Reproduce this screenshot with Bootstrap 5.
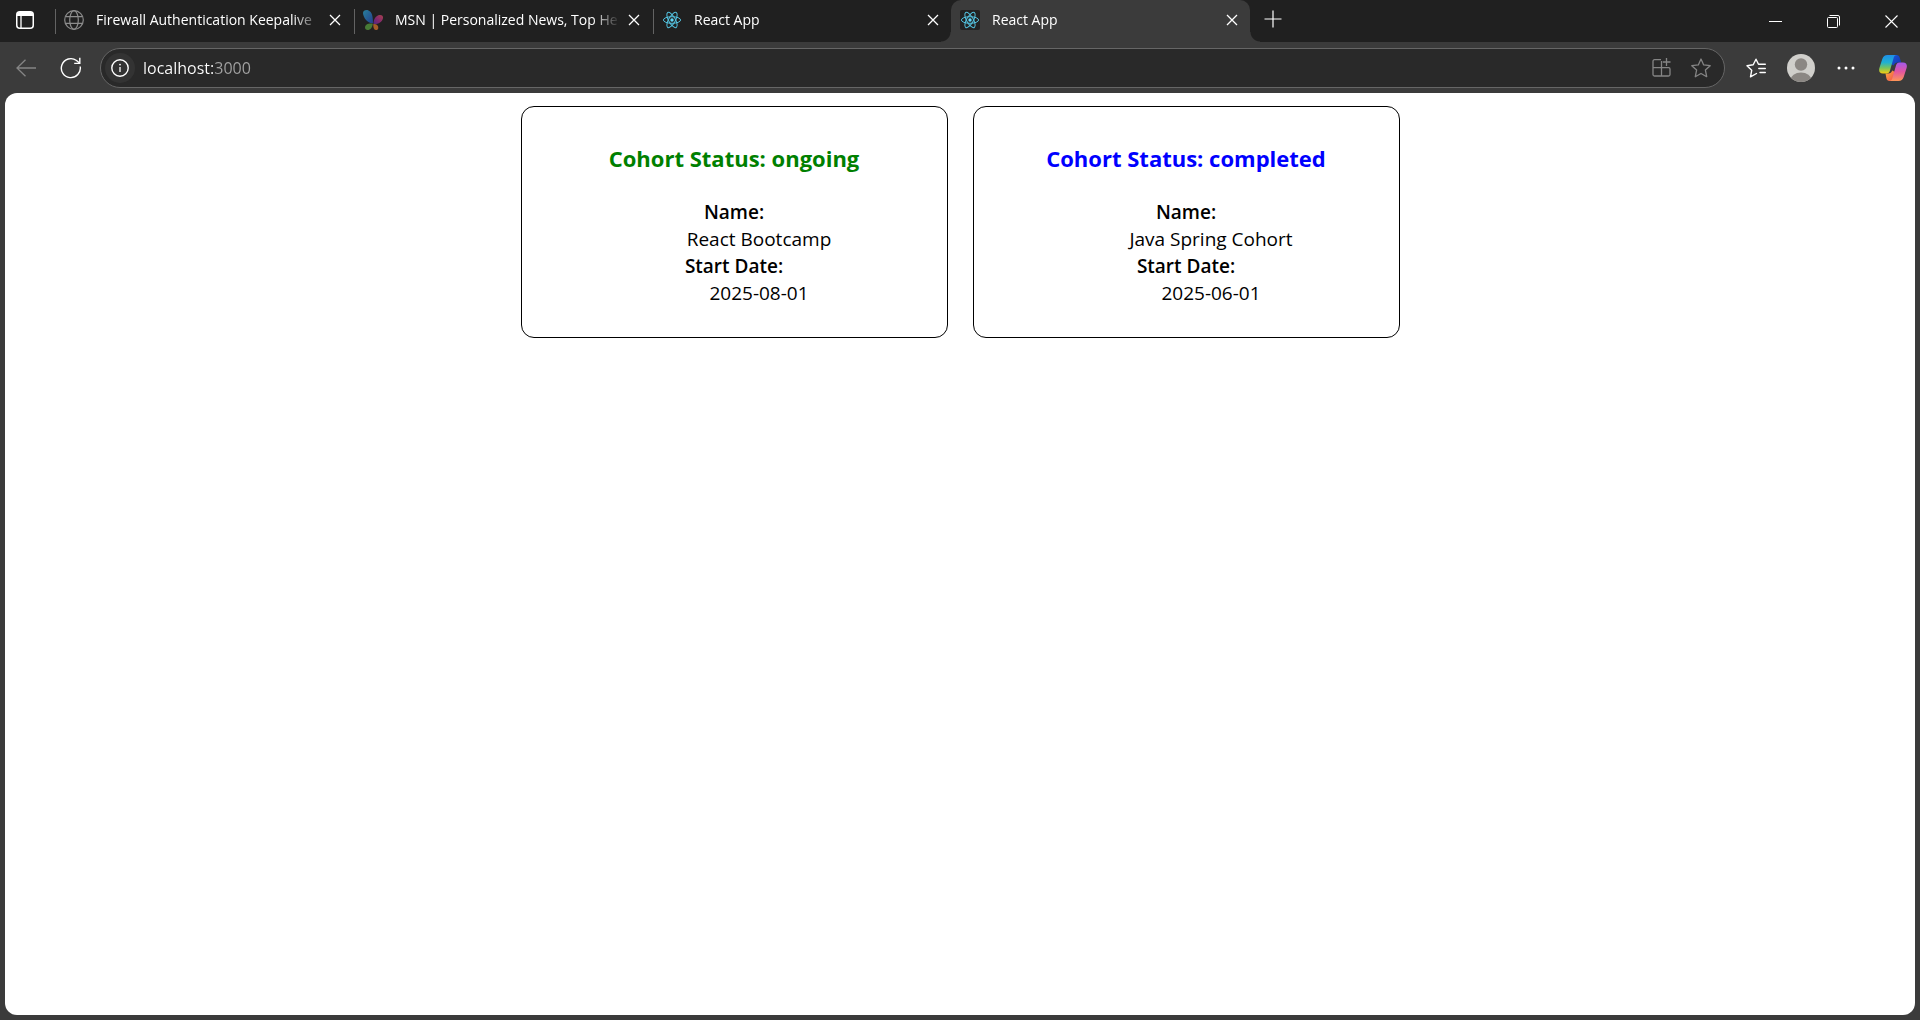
<!DOCTYPE html>
<html lang="en">
<head>
<meta charset="utf-8">
<meta name="viewport" content="width=device-width, initial-scale=1">
<title>React App</title>
<link href="https://cdn.jsdelivr.net/npm/bootstrap@5.3.0/dist/css/bootstrap.min.css" rel="stylesheet">
<style>
  :root { --strip: #202020; --bar: #3b3b3b; --field: #292929; }
  body { font-family: "Open Sans", "Noto Sans", sans-serif; background: var(--bar); color: #000; }
  svg { display: block; flex: none; }
  button { color: #fff; }
  .bare { border: 0; padding: 0; background: none; display: flex; align-items: center; justify-content: center; flex: none; }

  .tab-strip { background: var(--strip); height: 42px; }
  .strip-menu { width: 50px; height: 40px; }
  .tabs { margin-left: 4px; }
  .browser-tab { flex: 0 1 299px; min-width: 0; height: 42px; padding: 0 8px 2px 10px; position: relative; }
  .browser-tab:not(.current)::before { content: ""; position: absolute; left: 1px; top: 9px; width: 1px; height: 25px; background: #636363; }
  .browser-tab.current { background: var(--bar); border-radius: 10px 10px 0 0; padding-left: 9px; }
  .browser-tab.current::before, .browser-tab.current::after { content: ""; position: absolute; bottom: 0; width: 10px; height: 10px; }
  .browser-tab.current::before { left: -10px; background: radial-gradient(circle at 0 0, transparent 9px, var(--bar) 10px); }
  .browser-tab.current::after { right: -10px; background: radial-gradient(circle at 100% 0, transparent 9px, var(--bar) 10px); }
  .tab-link { gap: 12px; color: #fff; font-size: 14px; line-height: 20px; text-decoration: none; }
  .tab-text { white-space: nowrap; overflow: hidden; flex: 1; margin-right: 4px; -webkit-mask-image: linear-gradient(to left, transparent, #000 28px); mask-image: linear-gradient(to left, transparent, #000 28px); }
  .tab-close { width: 20px; height: 24px; }
  .new-tab { width: 46px; height: 38px; }
  .win-btn { width: 58px; height: 42px; }

  .toolbar { height: 51px; padding: 0 2px 0 3px; }
  .nav-btn { width: 45px; height: 40px; }
  .address { height: 40px; border: 1px solid #666; border-radius: 20px; background: var(--field); margin: 0 8px 0 7px; padding: 0 3px 0 4px; gap: 8px; }
  .site-info { width: 30px; height: 30px; border-radius: 50%; background: #333; }
  .address input { border: 0; outline: 0; padding: 0; height: 30px; min-width: 0; font-size: 16px; color: transparent;
    background: linear-gradient(to right, #fff 71px, #a3a3a3 71px); -webkit-background-clip: text; background-clip: text; }
  .field-btn { width: 40px; height: 36px; }
  .tool-btn { width: 45px; height: 40px; }
  .copilot-btn { width: 50px; height: 40px; }

  .viewport-page { background: #fff; border-radius: 12px; margin: 0 5px 5px; padding: 13px; gap: 25px; }
  .cohort { flex: 0 1 427px; border: 1px solid #000; border-radius: 13px; padding: 35px 12px 30px; text-align: center; }
  .cohort h3 { font-size: 22px; line-height: 32px; font-weight: 700; margin: 0 0 25px; }
  .cohort dl { margin: 0; font-size: 19px; line-height: 27px; }
  .cohort dt { font-weight: 600; }
  .cohort dd { margin: 0 0 0 50px; }
  .ongoing { color: green; }
  .completed { color: blue; }
</style>
</head>
<body class="d-flex flex-column min-vh-100">

<svg width="0" height="0" class="position-absolute" aria-hidden="true">
  <symbol id="x" viewBox="0 0 12 12"><path d="M1 1l10 10M11 1L1 11" fill="none" stroke="#fff" stroke-width="1.3"/></symbol>
  <symbol id="react" viewBox="0 0 20 20">
    <g fill="none" stroke="#53c1de" stroke-width="1">
      <ellipse cx="10" cy="10" rx="8.6" ry="3.3"/>
      <ellipse cx="10" cy="10" rx="8.6" ry="3.3" transform="rotate(60 10 10)"/>
      <ellipse cx="10" cy="10" rx="8.6" ry="3.3" transform="rotate(120 10 10)"/>
    </g>
    <circle cx="10" cy="10" r="1.7" fill="#61dafb"/>
  </symbol>
</svg>

<header>
  <div class="tab-strip d-flex align-items-start">
    <button class="bare strip-menu" aria-label="Tab actions">
      <svg width="18" height="18" viewBox="0 0 18 18"><rect x=".75" y=".75" width="16.5" height="16.5" rx="3" fill="none" stroke="#fff" stroke-width="1.5"/><path d="M1 5V3.5A2.5 2.5 0 0 1 3.500 1h11A2.500 2.500 0 0 1 17 3.500V5z" fill="#fff"/><path d="M5 5v12" stroke="#fff" stroke-width="1.300"/></svg>
    </button>
    <nav class="tabs d-flex flex-grow-1" aria-label="Tabs">
      <div class="browser-tab d-flex align-items-center">
        <a href="#" class="tab-link d-flex align-items-center flex-grow-1 overflow-hidden">
          <svg width="20" height="20" viewBox="0 0 20 20" fill="none" stroke="#8c8c8c" stroke-width="1.2"><circle cx="10" cy="10" r="9.300"/><ellipse cx="10" cy="10" rx="4.300" ry="9.300"/><path d="M1.500 6.700h17M1.500 13.300h17"/></svg>
          <span class="tab-text">Firewall Authentication Keepalive</span>
        </a>
        <button class="bare tab-close" aria-label="Close tab"><svg width="12" height="12"><use href="#x"/></svg></button>
      </div>
      <div class="browser-tab d-flex align-items-center">
        <a href="#" class="tab-link d-flex align-items-center flex-grow-1 overflow-hidden">
          <svg width="20" height="20" viewBox="0 0 20 20">
            <defs>
              <linearGradient id="wingBlue" x1="0" y1="0" x2="1" y2="1"><stop offset="0" stop-color="#287f9b"/><stop offset="1" stop-color="#233f8c"/></linearGradient>
              <linearGradient id="wingPink" x1="1" y1="0" x2="0" y2="1"><stop offset="0" stop-color="#a8424d"/><stop offset=".6" stop-color="#7d2570"/><stop offset="1" stop-color="#4d2a80"/></linearGradient>
            </defs>
            <path d="M0 3C0 .5 3-.5 5.500.4 9 1.800 10 6 10 13 8 13.500 5 12.500 3 10 1 7.600 0 5 0 3z" fill="url(#wingBlue)"/>
            <path d="M10.500 14C10.500 9 13 5.500 16.500 5c2.500-.4 4 1 3.400 3.500-.8 3.500-4.900 6-9.400 5.500z" fill="url(#wingPink)"/>
            <path d="M2 17.500C2 14.500 5 13 9.800 13.500 9.500 17.500 7.500 20 4.500 20 3 20 2 19 2 17.500z" fill="#477a35"/>
            <path d="M10.300 14c3-.3 5 1.200 5 3.700 0 1.500-1 2.300-2.200 2.300-2 0-3-2-2.800-6z" fill="#a65c28"/>
          </svg>
          <span class="tab-text">MSN | Personalized News, Top He</span>
        </a>
        <button class="bare tab-close" aria-label="Close tab"><svg width="12" height="12"><use href="#x"/></svg></button>
      </div>
      <div class="browser-tab d-flex align-items-center">
        <a href="#" class="tab-link d-flex align-items-center flex-grow-1 overflow-hidden">
          <svg width="20" height="20"><use href="#react"/></svg>
          <span class="tab-text">React App</span>
        </a>
        <button class="bare tab-close" aria-label="Close tab"><svg width="12" height="12"><use href="#x"/></svg></button>
      </div>
      <div class="browser-tab current d-flex align-items-center">
        <a href="#" class="tab-link d-flex align-items-center flex-grow-1 overflow-hidden" aria-current="page">
          <svg width="20" height="20"><rect width="20" height="20" rx="2" fill="#222"/><use href="#react"/></svg>
          <span class="tab-text">React App</span>
        </a>
        <button class="bare tab-close" aria-label="Close tab"><svg width="12" height="12"><use href="#x"/></svg></button>
      </div>
      <button class="bare new-tab" aria-label="New tab"><svg width="18" height="18" viewBox="0 0 18 18"><path d="M9 .5v17M.5 9h17" stroke="#fff" stroke-width="1.200"/></svg></button>
    </nav>
    <button class="bare win-btn" aria-label="Minimize"><svg width="13" height="13" viewBox="0 0 13 13"><path d="M0 6.500h13" stroke="#fff"/></svg></button>
    <button class="bare win-btn" aria-label="Restore"><svg width="13" height="13" viewBox="0 0 13 13" fill="none" stroke="#fff"><rect x=".5" y="2.500" width="10" height="10" rx="1"/><path d="M2.500.5H11A1.500 1.500 0 0 1 12.500 2v8.500"/></svg></button>
    <button class="bare win-btn" aria-label="Close"><svg width="13" height="13" viewBox="0 0 13 13"><path d="M.5.5l12 12M12.500.5l-12 12" stroke="#fff" stroke-width="1.100"/></svg></button>
  </div>

  <div class="toolbar d-flex align-items-center">
    <button class="bare nav-btn" aria-label="Back"><svg width="20" height="18" viewBox="0 0 20 18" fill="none" stroke="#858585" stroke-width="1.300"><path d="M20 9H1M9.500.7L1 9l8.500 8.300"/></svg></button>
    <button class="bare nav-btn" aria-label="Refresh"><svg width="22" height="22" viewBox="0 0 22 22" fill="none" stroke="#fff" stroke-width="1.400"><path d="M20.200 9.500A9.500 9.500 0 1 1 16.500 3.500L19.500 6"/><path d="M19.800.8v5.600h-5.600"/></svg></button>
    <form class="address d-flex align-items-center flex-grow-1">
      <button type="button" class="bare site-info" aria-label="Site information"><svg width="18" height="18" viewBox="0 0 18 18"><circle cx="9" cy="9" r="8.200" fill="none" stroke="#fff" stroke-width="1.400"/><path d="M9 8v5" stroke="#fff" stroke-width="1.300"/><circle cx="9" cy="5.600" r=".9" fill="#fff"/></svg></button>
      <input id="url" class="flex-grow-1" type="text" value="localhost:3000" aria-label="Address">
      <div class="d-flex">
        <button type="button" class="bare field-btn" aria-label="Install app"><svg width="19" height="19" viewBox="0 0 19 19" fill="none" stroke="#858585" stroke-width="1.300"><path d="M9 1.700H2.500A1.500 1.500 0 0 0 1 3.200v13.300A1.500 1.500 0 0 0 2.500 18h14a1.500 1.500 0 0 0 1.500-1.500V11a1.300 1.300 0 0 0-1.300-1.300H1M9.500 18V3"/><path d="M14.500 0v8M10.800 4h7.700"/></svg></button>
        <button type="button" class="bare field-btn" aria-label="Add to favorites"><svg width="20" height="20" viewBox="0 0 20 20"><path d="M10 1l2.700 5.900 6.500.8-4.800 4.400 1.300 6.600L10 15.500l-5.700 3.200 1.300-6.600L.8 7.700l6.500-.8z" fill="none" stroke="#858585" stroke-width="1.300" stroke-linejoin="round"/></svg></button>
      </div>
    </form>
    <div class="d-flex">
      <button class="bare tool-btn" aria-label="Favorites"><svg width="20" height="20" viewBox="0 0 20 20" fill="none" stroke="#fff" stroke-width="1.400" stroke-linejoin="round" stroke-linecap="round"><path d="M10.500 15.500L4.500 18.800l1.200-6.500L1 7.700l6.200-.9L10 1.200l2.500 5h6.800M12.800 10.500h6.500M14 14.500h5.300"/></svg></button>
      <button class="bare tool-btn" aria-label="Profile"><svg width="28" height="28" viewBox="0 0 28 28"><defs><clipPath id="disc"><circle cx="14" cy="14" r="14"/></clipPath></defs><g clip-path="url(#disc)"><rect width="28" height="28" fill="#d0cfcb"/><circle cx="14" cy="10.500" r="6.200" fill="#8b8783"/><ellipse cx="14" cy="26" rx="10.500" ry="7.600" fill="#8b8783"/></g></svg></button>
      <button class="bare tool-btn" aria-label="Settings and more"><svg width="18" height="4" viewBox="0 0 18 4" fill="#fff"><circle cx="2" cy="2" r="1.500"/><circle cx="9" cy="2" r="1.500"/><circle cx="16" cy="2" r="1.500"/></svg></button>
      <button class="bare copilot-btn" aria-label="Copilot"><svg width="28" height="26" viewBox="0 0 28 26">
        <defs>
          <linearGradient id="cpLeft" x1="0" y1="0" x2="0" y2="1"><stop offset="0" stop-color="#1f8fe8"/><stop offset=".4" stop-color="#1fb0d2"/><stop offset=".7" stop-color="#78c45c"/><stop offset="1" stop-color="#f7cd0f"/></linearGradient>
          <linearGradient id="cpRight" x1="0" y1="0" x2="0" y2="1"><stop offset="0" stop-color="#a259ec"/><stop offset=".5" stop-color="#e3559f"/><stop offset="1" stop-color="#ff9656"/></linearGradient>
          <linearGradient id="cpTop" x1="0" y1="0" x2="1" y2="1"><stop offset="0" stop-color="#1c55dc"/><stop offset="1" stop-color="#1238ac"/></linearGradient>
          <linearGradient id="cpLow" x1="0" y1="0" x2="1" y2="1"><stop offset="0" stop-color="#ffb03c"/><stop offset="1" stop-color="#ee4b4e"/></linearGradient>
        </defs>
        <path d="M11 0h6.500c1.800 0 2.700 1 3.200 2.700L22.200 7.500H19c-2.500 0-3.600 1-4.200 3L12 9z" fill="url(#cpTop)"/>
        <path d="M6.500 18.500H9c2.500 0 3.600-1 4.200-3L16 17l-1 9h-4.500c-1.800 0-2.600-1-3.100-2.700z" fill="url(#cpLow)"/>
        <path d="M8.500 0H18c-2 0-2.900 1.200-3.400 3L11 15.500c-.6 2-1.500 3-3.700 3H4C.5 18.500-.4 16 .4 13L3.300 4C4.200 1.200 5.800 0 8.500 0z" fill="url(#cpLeft)"/>
        <path d="M19.500 26H10c2 0 2.900-1.200 3.400-3L17 10.500c.6-2 1.500-3 3.700-3H24c3.500 0 4.400 2.500 3.600 5.500L24.700 22c-.9 2.800-2.500 4-5.200 4z" fill="url(#cpRight)"/>
      </svg></button>
    </div>
  </div>
</header>

<main class="viewport-page d-flex flex-grow-1 justify-content-center align-items-start">
  <article class="cohort">
    <h3 class="ongoing">Cohort Status: ongoing</h3>
    <dl>
      <dt>Name:</dt>
      <dd>React Bootcamp</dd>
      <dt>Start Date:</dt>
      <dd>2025-08-01</dd>
    </dl>
  </article>
  <article class="cohort">
    <h3 class="completed">Cohort Status: completed</h3>
    <dl>
      <dt>Name:</dt>
      <dd>Java Spring Cohort</dd>
      <dt>Start Date:</dt>
      <dd>2025-06-01</dd>
    </dl>
  </article>
</main>

<script src="https://cdn.jsdelivr.net/npm/bootstrap@5.3.0/dist/js/bootstrap.bundle.min.js"></script>
</body>
</html>
